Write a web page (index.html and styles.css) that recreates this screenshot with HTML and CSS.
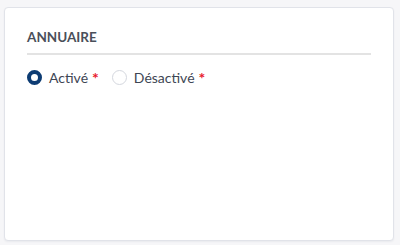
FILE: index.html
```html
<!DOCTYPE html>
<html lang="fr">
<head>
    <meta charset="UTF-8">
    <title>Annuaire</title>
    <link rel="stylesheet" href="styles.css">
</head>
<body>
    <div class="card">
        <div class="card-title">ANNUAIRE</div>
        <div class="radio-group">
            <label class="radio">
                <input type="radio" name="annuaire" checked>
                <span class="radio-mark"></span>
                <span class="radio-label">Activé</span>
                <span class="required">*</span>
            </label>
            <label class="radio">
                <input type="radio" name="annuaire">
                <span class="radio-mark"></span>
                <span class="radio-label">Désactivé</span>
                <span class="required">*</span>
            </label>
        </div>
    </div>
</body>
</html>
```

FILE: styles.css
```css
html, body {
    margin: 0;
    padding: 0;
    background: #f6f6f8;
    font-family: Lato, 'Open Sans', 'Liberation Sans', sans-serif;
    color: #3e4654;
}
body {
    padding: 7px 6px 4px 4px;
    height: 245px;
    box-sizing: border-box;
}
.card {
    height: 100%;
    box-sizing: border-box;
    background: #fff;
    border: 1px solid #e1e3e9;
    border-radius: 4px;
    box-shadow: 0 1px 2px rgba(40, 50, 80, 0.06);
    padding: 21px 22px 0 22px;
}
.card-title {
    font-size: 13.5px;
    font-weight: 700;
    color: #4a4f5a;
    padding-bottom: 8px;
    border-bottom: 2px solid #e3e3e3;
}
.radio-group {
    display: flex;
    gap: 13px;
    margin-top: 14px;
    align-items: center;
}
.radio {
    display: flex;
    align-items: center;
    font-size: 14px;
    color: #3e4654;
    cursor: pointer;
}
.radio input {
    display: none;
}
.radio-mark {
    width: 15px;
    height: 15px;
    border-radius: 50%;
    border: 1px solid #d4d7de;
    box-sizing: border-box;
    margin-right: 7px;
    background: #fff;
}
.radio input:checked + .radio-mark {
    border: 4px solid #0d3c73;
}
.required {
    color: #e8192c;
    font-size: 16px;
    font-weight: 700;
    margin-left: 4px;
    line-height: 1;
    align-self: flex-start;
    margin-top: 1px;
}
```
